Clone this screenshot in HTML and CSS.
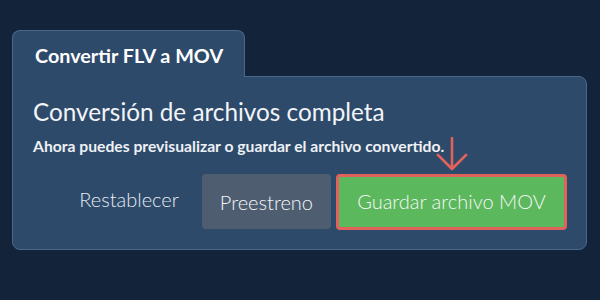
FILE: index.html
```html
<!DOCTYPE html>
<html lang="es">
<head>
<meta charset="utf-8">
<link rel="stylesheet" href="styles.css">
</head>
<body>
<div class="wrap">
  <div class="tab">Convertir FLV a MOV</div>
  <div class="panel">
    <h1 class="title">Conversión de archivos completa</h1>
    <p class="sub">Ahora puedes previsualizar o guardar el archivo convertido.</p>
    <div class="actions">
      <button class="btn btn-link">Restablecer</button>
      <button class="btn btn-gray">Preestreno</button>
      <div class="save-wrap">
        <svg class="arrow" width="32" height="34" viewBox="0 0 32 34" aria-hidden="true">
          <path d="M16 1 V31 M2 18 L16 32 L30 18" fill="none" stroke="#e0625b" stroke-width="2.6" stroke-linecap="round" stroke-linejoin="round"/>
        </svg>
        <button class="btn btn-green">Guardar archivo MOV</button>
      </div>
    </div>
  </div>
</div>
</body>
</html>
```

FILE: styles.css
```css
* { box-sizing: border-box; }
html, body { margin: 0; padding: 0; }
body {
  width: 600px;
  height: 300px;
  background: #12233a;
  font-family: Lato, "Open Sans", sans-serif;
  color: #fff;
  overflow: hidden;
}
.wrap {
  padding: 30px 13px 0 12px;
  display: flex;
  flex-direction: column;
  align-items: flex-start;
}
.tab {
  position: relative;
  z-index: 2;
  width: 233px;
  height: 47px;
  margin-bottom: -1px;
  padding: 12px 0 0 22px;
  background: #2d4a6b;
  border: 1px solid #4c6889;
  border-bottom: none;
  border-radius: 8px 8px 0 0;
  font-weight: 700;
  font-size: 19.8px;
  line-height: 24px;
}
.panel {
  align-self: stretch;
  height: 174px;
  background: #2d4a6b;
  border: 1px solid #4c6889;
  border-radius: 0 8px 8px 8px;
  padding: 20px 19px 0 20px;
}
.title {
  margin: 0;
  font-weight: 400;
  font-size: 24.3px;
  line-height: 30px;
  color: #f2f4f7;
}
.sub {
  margin: 9px 0 0;
  font-weight: 700;
  font-size: 15.7px;
  line-height: 20px;
  color: #eef1f4;
}
.actions {
  display: flex;
  justify-content: flex-end;
  align-items: flex-end;
  gap: 5px;
  margin-top: -19px;
}
.btn {
  font-family: Lato, "Open Sans", sans-serif;
  font-weight: 300;
  font-size: 20px;
  line-height: 24px;
  color: #f4f6f8;
  border: none;
  border-radius: 4px;
  cursor: pointer;
  white-space: nowrap;
}
.btn-link {
  background: transparent;
  padding: 13px 18px 19px;
  height: 56px;
  color: #e6ebf0;
}
.btn-gray {
  background: #4e5e70;
  padding: 16px 18px 15px;
  height: 55px;
  margin-bottom: 1px;
}
.save-wrap {
  display: flex;
  flex-direction: column;
  align-items: center;
}
.arrow {
  display: block;
  margin-bottom: 3px;
}
.btn-green {
  background: #5cb85c;
  border: 3px solid #e0625b;
  padding: 12px 18px 14px;
  height: 56px;
  width: 231px;
}
```
